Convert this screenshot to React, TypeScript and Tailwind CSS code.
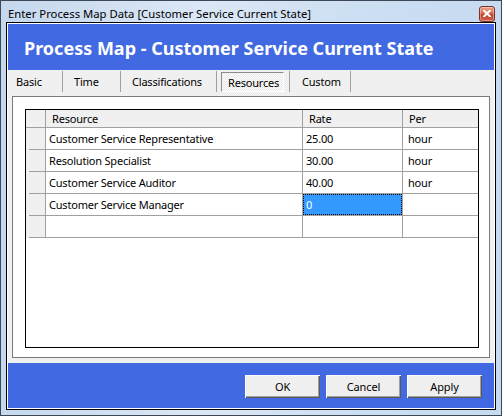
import React from "react";

const rows = [
  { name: "Customer Service Representative", rate: "25.00", per: "hour" },
  { name: "Resolution Specialist", rate: "30.00", per: "hour" },
  { name: "Customer Service Auditor", rate: "40.00", per: "hour" },
  { name: "Customer Service Manager", rate: "0", per: "", selected: true },
  { name: "", rate: "", per: "" },
];

const tabs = [
  { label: "Basic", w: "w-[55px]", pl: "pl-[8px]" },
  { label: "Time", w: "w-[58px]", pl: "pl-[11px]" },
  { label: "Classifications", w: "w-[96px]", pl: "pl-[11px]" },
  { label: "Resources", w: "w-[73px]", pl: "pl-[4px]", active: true },
  { label: "Custom", w: "w-[61px]", pl: "pl-[12px]" },
];

function CloseButton() {
  return (
    <div className="w-[16px] h-[16px] rounded-[3px] border border-[#7b3124] bg-[linear-gradient(#eba58f,#d76a4f_45%,#c2442b_55%,#d0614a)] shadow-[inset_0_0_0_1px_rgba(255,255,255,0.35)] flex items-center justify-center">
      <svg width="8" height="7" viewBox="0 0 8 7">
        <path d="M1 0.5 L7 6.5 M7 0.5 L1 6.5" stroke="#fff" strokeWidth="2" strokeLinecap="square" />
      </svg>
    </div>
  );
}

function DialogButton({ label }: { label: string }) {
  return (
    <button className="w-[75px] h-[23px] bg-[#efefef] text-[11px] tracking-[-0.1px] text-black flex items-center justify-center pt-[1px] shadow-[inset_1px_1px_#ffffff,inset_-1px_-1px_#595959,inset_-2px_-2px_#a0a0a0]">
      {label}
    </button>
  );
}

export default function App() {
  return (
    <div className="w-[502px] h-[416px] border border-[#3d4756] bg-[linear-gradient(90deg,#c5d8ee,#dbe7f5_40%,#cddff3_70%,#c7daf0)] flex flex-col font-['Noto_Sans','Open_Sans',sans-serif] text-[11px] tracking-[-0.2px] text-black overflow-hidden">
      {/* caption bar */}
      <div className="h-[21px] flex items-center justify-between pl-[7px] pr-[6px] shrink-0">
        <span className="text-[11.3px] tracking-normal leading-none pt-[4px]">Enter Process Map Data [Customer Service Current State]</span>
        <div className="pt-[4px]">
          <CloseButton />
        </div>
      </div>

      {/* client area */}
      <div className="mx-[5px] mb-[5px] h-[388px] border border-black shrink-0">
        <div className="h-full border border-white flex flex-col">
          <div className="h-[46px] bg-[#4169e1] flex items-center pl-[16px] pt-[2px] shrink-0">
            <span className="text-white font-bold text-[18px] tracking-normal leading-none">
              Process Map - Customer Service Current State
            </span>
          </div>

          <div className="h-[293px] bg-[#f0f0f0] flex flex-col shrink-0">
            {/* tab strip */}
            <div className="h-[23px] flex shrink-0">
              {tabs.map((t) => (
                <div key={t.label} className={`${t.w} h-full py-[1px] flex`}>
                  <div className="flex-1 flex border-r border-[#a0a0a0]">
                    {t.active ? (
                      <div className="mt-[1px] ml-[4px] w-[63px] h-[20px] border-t border-l border-[#8c8c8c] border-r-white border-b-white border-r border-b bg-[image:repeating-conic-gradient(#ffffff_0_25%,#e6e6e6_0_50%)] bg-[length:2px_2px] flex items-center pl-[6px] pt-[2px]">
                        Resources
                      </div>
                    ) : (
                      <div className={`flex items-center pt-[1px] ${t.pl}`}>{t.label}</div>
                    )}
                  </div>
                </div>
              ))}
            </div>

            {/* page panel */}
            <div className="mt-[3px] mx-[4px] h-[262px] border border-[#7a7a7a] bg-white pl-[12px] pt-[12px] pr-[10px] pb-[9px] shrink-0">
              <div className="h-full border border-black flex flex-col">
                {/* header row */}
                <div className="h-[18px] flex bg-[#f0f0f0] border-b border-[#a0a0a0] shrink-0">
                  <div className="w-[20px] border-r border-[#a0a0a0]" />
                  <div className="w-[257px] border-r border-[#a0a0a0] pl-[6px] pt-[1px] flex items-center">Resource</div>
                  <div className="w-[100px] border-r border-[#a0a0a0] pl-[6px] pt-[1px] flex items-center">Rate</div>
                  <div className="w-[75px] pl-[6px] pt-[1px] flex items-center">Per</div>
                </div>
                {rows.map((r, i) => (
                  <div key={i} className="h-[22px] flex shrink-0">
                    <div className="w-[20px] bg-[#f0f0f0] border-r border-[#a0a0a0] flex flex-col justify-end">
                      <div className="ml-[3px] border-b border-[#a0a0a0]" />
                    </div>
                    <div className="w-[257px] border-r border-b border-[#a0a0a0] pl-[3px] pt-[1px] flex items-center">{r.name}</div>
                    <div className="w-[100px] border-r border-b border-[#a0a0a0] flex">
                      {r.selected ? (
                        <div className="flex-1 bg-[#3399ff] border border-dotted border-black text-white flex items-center pl-[2px] pt-[1px]">
                          {r.rate}
                        </div>
                      ) : (
                        <div className="flex-1 flex items-center pl-[3px] pt-[1px]">{r.rate}</div>
                      )}
                    </div>
                    <div className="w-[75px] border-b border-[#a0a0a0] pl-[5px] pt-[1px] flex items-center">{r.per}</div>
                  </div>
                ))}
              </div>
            </div>
          </div>

          {/* button bar */}
          <div className="flex-1 bg-[#4169e1] flex justify-end items-start pt-[12px] pr-[12px] gap-[6px]">
            <DialogButton label="OK" />
            <DialogButton label="Cancel" />
            <DialogButton label="Apply" />
          </div>
        </div>
      </div>
    </div>
  );
}
